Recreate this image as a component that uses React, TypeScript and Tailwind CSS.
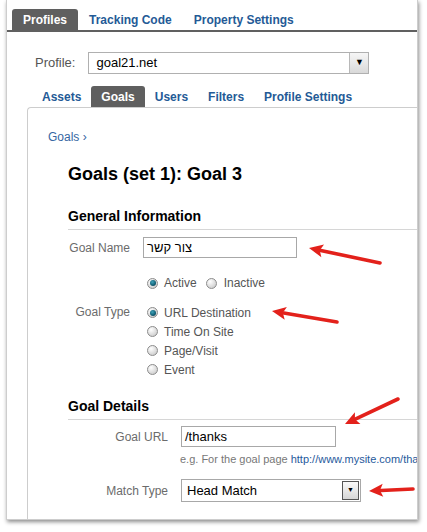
const font = "font-['Liberation_Sans',Arial,sans-serif]"

function Radio({ checked }: { checked?: boolean }) {
  return (
    <span className="flex h-[11px] w-[11px] shrink-0 items-center justify-center rounded-full border border-[#8c8c8c] bg-[radial-gradient(circle_at_35%_30%,#ffffff,#d4d4d4_70%,#bdbdbd)]">
      {checked && (
        <span className="h-[6px] w-[6px] rounded-full bg-[radial-gradient(circle_at_40%_35%,#3fa3ba,#105d73_60%,#0a3a4a)]" />
      )}
    </span>
  )
}

function Arrow({ x1, y1, x2, y2 }: { x1: number; y1: number; x2: number; y2: number }) {
  // tail (x1,y1) -> tip (x2,y2)
  const dx = x2 - x1
  const dy = y2 - y1
  const len = Math.hypot(dx, dy)
  const ux = dx / len
  const uy = dy / len
  const head = 14
  const half = 6.5
  const bx = x2 - ux * head
  const by = y2 - uy * head
  const px = -uy
  const py = ux
  return (
    <g>
      <line x1={x1} y1={y1} x2={bx + ux * 2} y2={by + uy * 2} stroke="#e3211b" strokeWidth={3.6} strokeLinecap="round" />
      <polygon
        points={`${x2},${y2} ${bx + px * half},${by + py * half} ${bx + ux * 3},${by + uy * 3} ${bx - px * half},${by - py * half}`}
        fill="#e3211b"
      />
    </g>
  )
}

const topTabs = ['Profiles', 'Tracking Code', 'Property Settings']
const subTabs = ['Assets', 'Goals', 'Users', 'Filters', 'Profile Settings']
const goalTypes = ['URL Destination', 'Time On Site', 'Page/Visit', 'Event']

export default function App() {
  return (
    <div className={`relative h-[532px] w-[427px] overflow-hidden bg-white ${font}`}>
      <div className="ml-[6px] h-[520px] w-[412px] overflow-hidden border-x border-b border-[#cdcdcd] shadow-[1px_2px_4px_rgba(0,0,0,0.45)]">
        {/* top tabs */}
        <div className="mt-[9px] flex h-[21px] pl-[5px]">
          {topTabs.map((t, i) => (
            <div
              key={t}
              className={`flex items-center rounded-t-[3px] px-[11px] text-[12px] font-bold ${
                i === 0 ? 'bg-[#5f5f5f] text-white' : 'text-[#245a96]'
              }`}
            >
              {t}
            </div>
          ))}
        </div>
        <div className="h-[2px] bg-[#606060]" />

        {/* profile select */}
        <div className="mt-[20px] flex items-center pl-[28px]">
          <span className="text-[13px] text-[#555]">Profile:</span>
          <div className="ml-[13px] flex h-[22px] w-[281px] border border-[#b0b0b0]">
            <span className="flex-1 pl-[7px] text-[13px] leading-[20px] text-black">goal21.net</span>
            <span className="flex w-[19px] items-center justify-center border-l border-[#b8b8b8] bg-[linear-gradient(#f6f6f6,#d9d9d9)] text-[9px] text-black">
              ▼
            </span>
          </div>
        </div>

        {/* sub tabs */}
        <div className="mt-[12px] flex h-[21px] pl-[25px]">
          {subTabs.map((t) => (
            <div
              key={t}
              className={`flex items-center rounded-t-[3px] px-[10px] text-[12px] font-bold ${
                t === 'Goals' ? 'bg-[#5f5f5f] text-white' : 'text-[#245a96]'
              }`}
            >
              {t}
            </div>
          ))}
        </div>

        {/* inner panel */}
        <div className="ml-[20px] h-full rounded-tl-[4px] border-l border-t border-[#cdcdcd]">
          <div className="pl-[20px] pt-[22px] text-[12px] leading-[14px] text-[#3567a3]">Goals ›</div>

          <div className="pl-[40px]">
            <h1 className="mt-[20px] text-[18px] font-bold leading-[21px] text-black">Goals (set 1): Goal 3</h1>

            <h2 className="mt-[23px] border-b border-[#d6d6d6] pb-[4px] text-[14px] font-bold leading-[17px] text-black">
              General Information
            </h2>

            <div className="mt-[7px] flex items-center">
              <span className="w-[62px] text-right text-[12px] text-[#6b6b6b]">Goal Name</span>
              <div className="ml-[13px] h-[21px] w-[154px] border border-[#a8a8a8] pl-[3px] text-[13px] leading-[19px] text-black">
                צור קשר
              </div>
            </div>

            <div className="mt-[15px] flex h-[20px] items-center pl-[79px] text-[12px] text-[#555]">
              <Radio checked />
              <span className="ml-[6px]">Active</span>
              <span className="ml-[9px]">
                <Radio />
              </span>
              <span className="ml-[7px]">Inactive</span>
            </div>

            <div className="mt-[10px] flex">
              <span className="w-[71px] pr-[9px] text-right text-[12px] leading-[19px] text-[#6b6b6b]">Goal Type</span>
              <div className="ml-[8px] flex flex-col">
                {goalTypes.map((g, i) => (
                  <div key={g} className="flex h-[19px] items-center text-[12px] text-[#555]">
                    <Radio checked={i === 0} />
                    <span className="ml-[6px]">{g}</span>
                  </div>
                ))}
              </div>
            </div>

            <h2 className="mt-[19px] border-b border-[#d6d6d6] pb-[4px] text-[14px] font-bold leading-[17px] text-black">
              Goal Details
            </h2>

            <div className="mt-[6px] flex items-center">
              <span className="w-[100px] text-right text-[12px] text-[#6b6b6b]">Goal URL</span>
              <div className="ml-[13px] h-[21px] w-[155px] border border-[#a8a8a8] pl-[3px] text-[13px] leading-[19px] text-black">
                /thanks
              </div>
            </div>

            <div className="mt-[6px] whitespace-nowrap pl-[112px] text-[11px] leading-[13px] text-[#777]">
              e.g. For the goal page <span className="text-[#1f5a9c]">http://www.mysite.com/thanks.html</span>
            </div>

            <div className="mt-[13px] flex items-center">
              <span className="w-[100px] text-right text-[12px] text-[#6b6b6b]">Match Type</span>
              <div className="ml-[13px] flex h-[23px] w-[180px] border border-[#a8a8a8] pr-[1px]">
                <span className="flex-1 pl-[5px] text-[13px] leading-[21px] text-black">Head Match</span>
                <span className="my-[1px] flex w-[17px] items-center justify-center border border-[#555] bg-[linear-gradient(#fafafa,#d6d6d6)] text-[7px] text-black">
                  ▼
                </span>
              </div>
            </div>
          </div>
        </div>
      </div>

      <svg className="pointer-events-none absolute left-0 top-0" width={427} height={532}>
        <Arrow x1={380} y1={263} x2={309} y2={248} />
        <Arrow x1={337} y1={322} x2={272} y2={311} />
        <Arrow x1={398} y1={399} x2={345} y2={424} />
        <Arrow x1={413} y1={489} x2={369} y2={491} />
      </svg>
    </div>
  )
}
